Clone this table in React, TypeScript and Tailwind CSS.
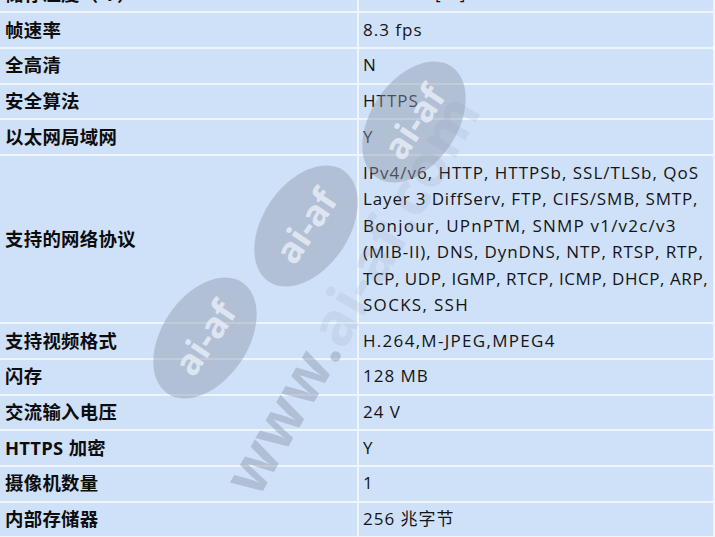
type Row = { label: string; value: React.ReactNode; track?: string };

const protocolLines: [string, string][] = [
  ["IPv4/v6, HTTP, HTTPSb, SSL/TLSb, QoS", "tracking-[1px]"],
  ["Layer 3 DiffServ, FTP, CIFS/SMB, SMTP,", "tracking-[0.85px]"],
  ["Bonjour, UPnPTM, SNMP v1/v2c/v3", "tracking-[1.2px]"],
  ["(MIB-II), DNS, DynDNS, NTP, RTSP, RTP,", "tracking-[0.9px]"],
  ["TCP, UDP, IGMP, RTCP, ICMP, DHCP, ARP,", "tracking-[0.55px]"],
  ["SOCKS, SSH", "tracking-[1.3px]"],
];

const rows: Row[] = [
  { label: "储存温度（°F）", value: "-4 - 140 [°F]" },
  { label: "帧速率", value: "8.3 fps" },
  { label: "全高清", value: "N" },
  { label: "安全算法", value: "HTTPS" },
  { label: "以太网局域网", value: "Y" },
  {
    label: "支持的网络协议",
    value: (
      <div className="flex flex-col">
        {protocolLines.map(([t, cls]) => (
          <span key={t} className={cls}>
            {t}
          </span>
        ))}
      </div>
    ),
  },
  { label: "支持视频格式", value: "H.264,M-JPEG,MPEG4", track: "tracking-[1.3px]" },
  { label: "闪存", value: "128 MB" },
  { label: "交流输入电压", value: "24 V" },
  { label: "HTTPS 加密", value: "Y" },
  { label: "摄像机数量", value: "1" },
  { label: "内部存储器", value: "256 兆字节" },
];

// watermark stamp, floats over the table
function Stamp({ x, y }: { x: number; y: number }) {
  return (
    <div
      className="absolute flex h-[86px] w-[134px] items-center justify-center rounded-[50%] bg-[#8d99aa]/45 -rotate-[56deg]"
      style={{ left: x - 67, top: y - 43 }}
    >
      <span className="font-['Open_Sans',sans-serif] text-[36px] font-bold leading-none text-[#e6edf7]/85">
        ai-af
      </span>
    </div>
  );
}

export default function App() {
  return (
    <div className="relative h-[537px] w-[715px] overflow-hidden bg-[#eef5fd]">
      <div className="-mt-[22.5px] grid grid-cols-[357px_354px] gap-[2px] pb-[2px] pr-[2px]">
        {rows.map((r, i) => (
          <div key={i} className="contents">
            <div className="flex items-center bg-[#cfe1f9] py-[3.6px] pl-[5px] font-['Open_Sans','Noto_Sans_CJK_SC',sans-serif] text-[18.4px] font-bold leading-[26.5px] tracking-[0.3px] text-[#0d0d0d]">
              {r.label}
            </div>
            <div
              className={`flex items-center overflow-hidden bg-[#cfe1f9] py-[3.6px] pl-[4px] font-['Open_Sans','Noto_Sans_CJK_SC',sans-serif] text-[17px] leading-[26.5px] text-[#141414] ${
                r.track ?? "tracking-[1px]"
              }`}
            >
              <div className="whitespace-nowrap">{r.value}</div>
            </div>
          </div>
        ))}
      </div>

      <div className="pointer-events-none absolute inset-0">
        <Stamp x={414} y={122} />
        <Stamp x={306} y={226} />
        <Stamp x={205} y={338} />
        <div
          className="absolute origin-left -rotate-[60deg] whitespace-nowrap font-['Open_Sans',sans-serif] text-[60px] font-bold leading-none"
          style={{ left: 238, top: 458 }}
        >
          <span className="text-[#8a96a6]/45">www.</span>
          <span className="text-[#8a96a6]/15">ai-af.com</span>
        </div>
      </div>
    </div>
  );
}
